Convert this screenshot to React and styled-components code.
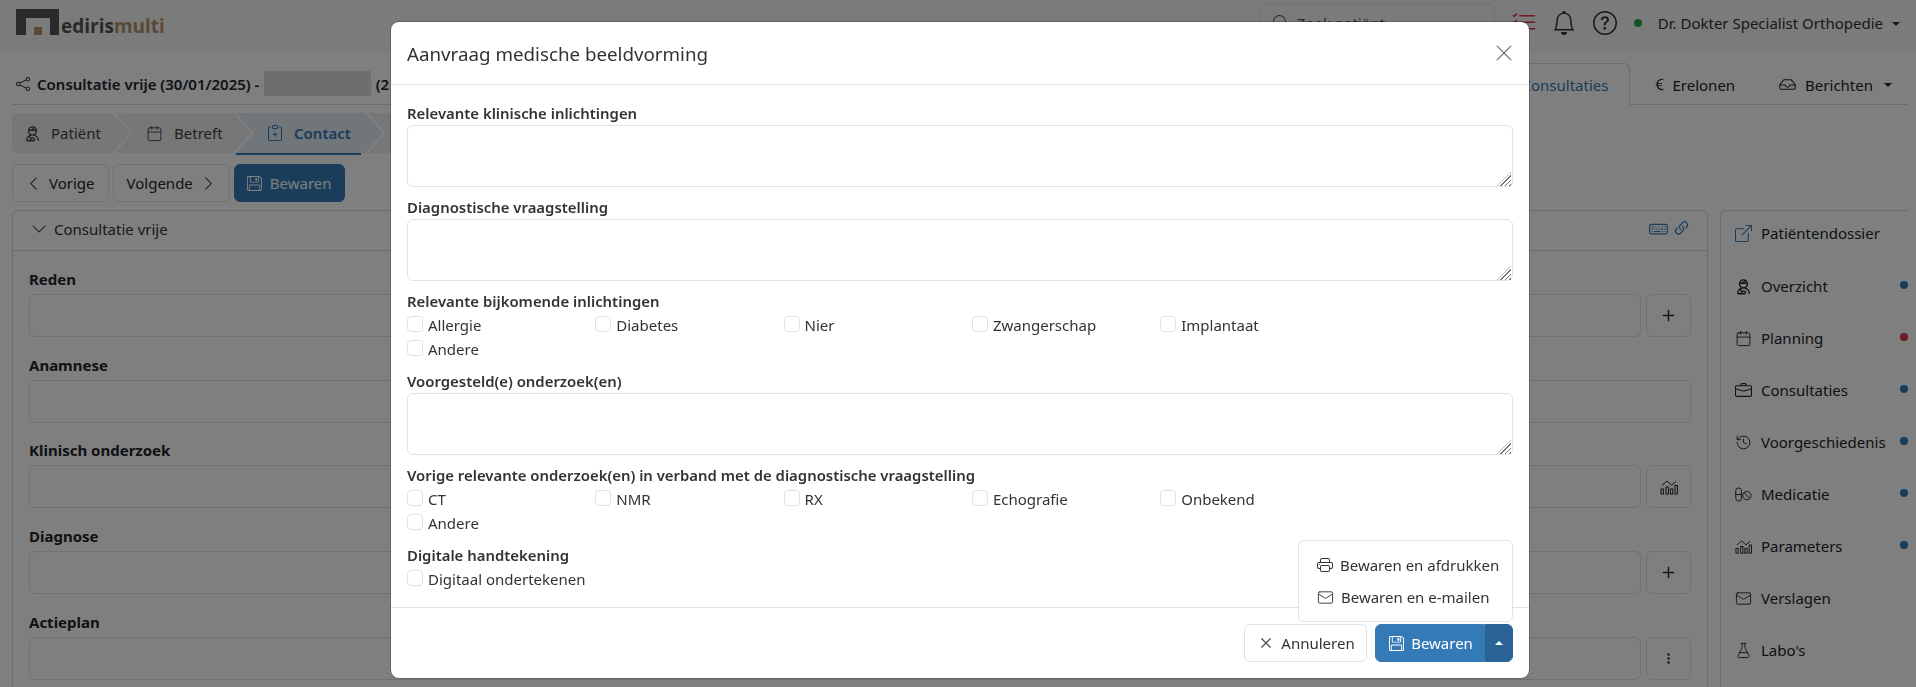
import React from 'react'
import styled, { createGlobalStyle } from 'styled-components'
import {
  BsShare, BsClipboardPlus, BsChevronLeft, BsChevronRight, BsChevronDown,
  BsFloppy, BsCurrencyEuro, BsInbox, BsBell, BsQuestionCircle, BsListCheck, BsKeyboard,
  BsLink45Deg, BsBoxArrowUpRight, BsBriefcase, BsPlusLg, BsThreeDotsVertical,
  BsPrinter, BsXLg, BsSearch,
} from 'react-icons/bs'
import { LiaUserInjuredSolid } from 'react-icons/lia'
import { Calendar, FlaskConical, History, Mail } from 'lucide-react'

const GlobalStyle = createGlobalStyle`
    html, body {
        margin: 0;
        height: 100%;
        overflow: hidden;
        background: #fff;
        color: #212529;
        font-family: "Noto Sans", "Open Sans", sans-serif;
        font-size: 15px;
        line-height: 24px;
    }
    * {
        box-sizing: border-box;
    }
`

const Page = styled.div`
    height: 687px;
    overflow: hidden;
`
const TopBar = styled.header`
    display: flex;
    align-items: center;
    justify-content: space-between;
    height: 53px;
    padding: 0 16px;
    background: #f6f6f6;
`
const Logo = styled.div`
    display: flex;
    align-items: flex-end;
    height: 26px;
    margin-top: -9px;
`
const LogoWord = styled.span`
    font-family: "Open Sans", sans-serif;
    font-weight: 700;
    font-size: 19px;
    line-height: 20px;
    margin-left: 1px;
    margin-bottom: -1px;
    color: #555;
    > b {
        color: #b4946a;
        font-weight: 700;
    }
`
const TopActions = styled.div`
    display: flex;
    align-items: center;
    color: #333;
    margin-top: -7px;
`
const SearchBox = styled.div`
    display: flex;
    align-items: center;
    gap: 8px;
    width: 235px;
    height: 38px;
    margin-right: 16px;
    padding: 0 12px;
    border: 1px solid #dee2e6;
    border-radius: 6px;
    font-size: 15px;
    color: #555;
`
const TopIcon = styled.span`
    display: flex;
    margin-right: ${p => p.$gap || 17}px;
    font-size: ${p => p.$size || 24}px;
    color: ${p => p.$color || 'inherit'};
`
const StatusDot = styled.span`
    width: 8px;
    height: 8px;
    margin-right: 16px;
    border-radius: 50%;
    background: #28a745;
`
const Caret = styled.span`
    display: inline-block;
    margin-left: ${p => p.$gap ?? 9}px;
    vertical-align: 3px;
    border-left: 4px solid transparent;
    border-right: 4px solid transparent;
    border-top: ${p => (p.$up ? '0' : '4px solid currentColor')};
    border-bottom: ${p => (p.$up ? '4px solid currentColor' : '0')};
`
const Content = styled.main`
    padding: 0 8px 0 12px;
`
const TitleRow = styled.div`
    display: flex;
    align-items: flex-end;
    justify-content: space-between;
    height: 52px;
    border-bottom: 1px solid #d8d8d8;
`
const RecordTitle = styled.h1`
    display: flex;
    align-items: center;
    gap: 7px;
    height: 41px;
    margin: 0;
    padding-left: 4px;
    font-size: 15px;
    font-weight: 600;
    white-space: nowrap;
`
const Redacted = styled.span`
    position: relative;
    z-index: 1;
    width: 107px;
    height: 25px;
    margin: 0 -15px 0 -2px;
    background: #ddd;
`
const Tabs = styled.nav`
    display: flex;
    align-items: stretch;
    height: 42px;
    margin-bottom: -1px;
    margin-right: -6px;
`
const Tab = styled.a`
    display: flex;
    align-items: center;
    gap: ${p => p.$gap || 9}px;
    padding: 1px 21px 0;
    color: ${p => (p.$active ? '#337ab7' : '#212529')};
    background: ${p => (p.$active ? '#fff' : 'transparent')};
    border: 1px solid ${p => (p.$active ? '#d8d8d8' : 'transparent')};
    border-bottom-color: ${p => (p.$active ? '#fff' : 'transparent')};
    border-radius: 6px 6px 0 0;
    > svg {
        flex: none;
    }
`
const Wizard = styled.div`
    display: flex;
    height: 42px;
    margin-top: 8px;
`
const Step = styled.a`
    display: flex;
    align-items: center;
    gap: ${p => p.$gap || 11}px;
    width: ${p => p.$width + 18}px;
    height: 40px;
    padding-left: ${p => p.$inset}px;
    margin-right: -15px;
    font-weight: ${p => (p.$active ? 600 : 400)};
    color: ${p => (p.$active ? '#337ab7' : '#444')};
    background: ${p => (p.$active ? '#e1ecf5' : '#eee')};
    clip-path: polygon(0 0, calc(100% - 18px) 0, 100% 50%, calc(100% - 18px) 100%, 0 100%, ${p => (p.$first ? '0 50%' : '18px 50%')});
    border-radius: ${p => (p.$first ? '5px 0 0 5px' : '0')};
    > svg {
        flex: none;
    }
`
const ActiveLine = styled.div`
    width: 125px;
    height: 2px;
    margin: -2px 0 0 224px;
    background: #337ab7;
`
const Actions = styled.div`
    display: flex;
    gap: 4px;
    margin-top: 9px;
`
const Button = styled.button`
    display: inline-flex;
    align-items: center;
    justify-content: center;
    gap: ${p => p.$gap || 8}px;
    height: 38px;
    padding: 0 ${p => p.$pad || 12}px;
    font: inherit;
    color: ${p => (p.$primary ? '#fff' : '#212529')};
    background: ${p => (p.$primary ? '#337ab7' : '#fff')};
    border: 1px solid ${p => (p.$primary ? '#337ab7' : '#dee2e6')};
    border-radius: 6px;
    > svg {
        flex: none;
    }
`
const Columns = styled.div`
    display: grid;
    grid-template-columns: 1696px 1fr;
    gap: 12px;
    margin-top: 8px;
`
const Panel = styled.section`
    height: 560px;
    border: 1px solid #d8d8d8;
    border-radius: 6px 6px 0 0;
`
const PanelHeader = styled.div`
    display: flex;
    align-items: center;
    justify-content: space-between;
    height: 40px;
    padding: 0 16px 3px 18px;
    border-bottom: 1px solid #d8d8d8;
    color: #333;
`
const PanelTitle = styled.span`
    display: flex;
    align-items: center;
    gap: 7px;
`
const PanelTools = styled.span`
    display: flex;
    align-items: center;
    gap: 4px;
    color: #337ab7;
    font-size: 19px;
    margin-top: -2px;
`
const PanelBody = styled.div`
    padding: 17px 16px 0;
`
const Field = styled.div`
    height: 85.7px;
`
const FieldLabel = styled.label`
    display: block;
    margin-bottom: 3px;
    font-weight: 700;
    font-size: 15px;
    line-height: 23px;
`
const FieldRow = styled.div`
    display: flex;
    gap: 5px;
`
const FieldInput = styled.div`
    flex: 1;
    height: 43px;
    border: 1px solid #dee2e6;
    border-radius: 6px;
`
const FieldButton = styled(Button)`
    width: 45px;
    height: 43px;
    padding: 0;
`
const Sidebar = styled.aside`
    height: 560px;
    padding: 0 0 0 14px;
    border: 1px solid #d8d8d8;
    border-right: 0;
    border-radius: 6px 0 0 0;
`
const SideItem = styled.a`
    display: flex;
    align-items: center;
    gap: 9px;
    height: 52px;
    > svg {
        flex: none;
        width: 17px;
        height: 17px;
    }
`
const SideHead = styled(SideItem)`
    height: 44px;
    margin-bottom: 5px;
    > svg {
        color: #337ab7;
    }
`
const SideDot = styled.span`
    width: 8px;
    height: 8px;
    margin-left: auto;
    margin-top: -3px;
    border-radius: 50%;
    background: ${p => p.$color};
`
// the line-awesome glyph sits small in its box
const PersonIcon = styled(LiaUserInjuredSolid)`
    && {
        width: 21px;
        height: 21px;
        margin: 0 -2px;
    }
`
const BoldX = styled(BsXLg)`
    stroke: currentColor;
    stroke-width: .6px;
`
const BoldPlus = styled(BsPlusLg)`
    stroke: currentColor;
    stroke-width: .5px;
`

// modal
const Backdrop = styled.div`
    position: fixed;
    z-index: 10;
    inset: 0;
    background: rgba(0, 0, 0, .5);
`
const Modal = styled.div`
    position: fixed;
    z-index: 11;
    top: 22px;
    left: 391px;
    width: 1138px;
    height: 656px;
    background: #fff;
    border-radius: 8px;
    box-shadow: 0 0 0 1px rgba(0, 0, 0, .2);
    display: flex;
    flex-direction: column;
`
const ModalHeader = styled.div`
    display: flex;
    align-items: center;
    justify-content: space-between;
    height: 63px;
    padding: 2px 16px 0;
    border-bottom: 1px solid #dee2e6;
`
const ModalTitle = styled.h2`
    margin: 0;
    font-size: 18.75px;
    font-weight: 400;
    color: #333;
`
const CloseButton = styled.button`
    display: flex;
    padding: 0;
    margin: -2px -1px 0 0;
    background: none;
    border: 0;
    color: #777;
    font-size: 20px;
`
const ModalBody = styled.div`
    flex: 1;
    padding: 16px 16px 0;
`
const Group = styled.div`
    margin-bottom: 8px;
`
const GroupLabel = styled.div`
    font-weight: 600;
    font-size: 14.9px;
    line-height: 24px;
    color: #333;
`
const TextAreaBox = styled.div`
    position: relative;
    height: 62px;
    &::after {
        content: "";
        position: absolute;
        right: 2px;
        bottom: 1px;
        width: 14px;
        height: 14px;
        pointer-events: none;
        clip-path: polygon(100% 0, 100% 100%, 0 100%);
        background: repeating-linear-gradient(135deg, #777 0 1.2px, transparent 1.2px 3px);
    }
`
const TextArea = styled.textarea`
    display: block;
    width: 100%;
    height: 100%;
    padding: 6px 12px;
    border: 1px solid #dee2e6;
    border-radius: 6px;
    outline: none;
    resize: none;
`
const CheckGrid = styled.div`
    display: grid;
    grid-template-columns: repeat(5, 188.3px);
`
const CheckLabel = styled.label`
    display: flex;
    align-items: center;
    gap: 5px;
    height: 24px;
    font-size: 15px;
    color: #333;
`
const CheckBox = styled.input.attrs({ type: 'checkbox' })`
    appearance: none;
    width: 16px;
    height: 16px;
    margin: -2px 0 0;
    border: 1px solid #dee2e6;
    border-radius: 4px;
    background: #fff;
`
const ModalFooter = styled.div`
    display: flex;
    justify-content: flex-end;
    gap: 8px;
    height: 71px;
    padding: 16px;
    border-top: 1px solid #dee2e6;
`
const CancelButton = styled(Button)`
    width: 123px;
    gap: 9px;
    padding: 0 0 0 4px;
    color: #333;
`
const SplitButton = styled.div`
    position: relative;
    display: flex;
`
const SaveMain = styled(Button)`
    width: 110px;
    gap: 7px;
    padding: 0 0 0 2px;
    border-radius: 6px 0 0 6px;
`
const SaveToggle = styled(Button)`
    width: 28px;
    padding: 0;
    background: #2a6496;
    border-color: #2a6496;
    border-radius: 0 6px 6px 0;
`
const SaveMenu = styled.div`
    position: absolute;
    right: 0;
    bottom: 40px;
    width: 215px;
    height: 82px;
    padding: 8px 0;
    background: #fff;
    border: 1px solid #dee2e6;
    border-radius: 6px;
`
const SaveMenuItem = styled.a`
    display: flex;
    align-items: center;
    gap: 7px;
    height: 32px;
    padding-left: 18px;
    color: #333;
    white-space: nowrap;
`

// no icon in the packages for these two
const PillIcon = () => (
  <svg width="18" height="16" viewBox="0 0 18 16" fill="none" stroke="currentColor" strokeWidth="1">
    <rect x="0.8" y="1" width="6" height="14" rx="3" />
    <path d="M0.8 8h6" />
    <circle cx="12.6" cy="9.2" r="4.4" />
    <path d="M9.6 6.2l6 6" />
  </svg>
)
const ChartIcon = () => (
  <svg width="18" height="16" viewBox="0 0 18 16" fill="none" stroke="currentColor" strokeWidth="1">
    <rect x="1" y="10" width="2.4" height="5" />
    <rect x="6" y="8" width="2.4" height="7" />
    <rect x="10.4" y="10" width="2.4" height="5" />
    <rect x="15" y="6.5" width="2.4" height="8.5" />
    <path d="M2 6.5L7 2l4.6 4.2L16 2.5" />
  </svg>
)

const steps = [
  { id: 'patient', label: 'Patiënt', icon: <LiaUserInjuredSolid size={21} />, width: 100, inset: 10, gap: 8, first: true },
  { id: 'betreft', label: 'Betreft', icon: <Calendar size={17} strokeWidth={1.3} />, width: 118, inset: 31 },
  { id: 'contact', label: 'Contact', icon: <BsClipboardPlus size={16} />, width: 129, inset: 31, active: true },
  { id: 'next', label: '', icon: null, width: 200, inset: 30 },
]

const fields = [
  { label: 'Reden', button: <BoldPlus size={15} /> },
  { label: 'Anamnese' },
  { label: 'Klinisch onderzoek', button: <ChartIcon /> },
  { label: 'Diagnose', button: <BoldPlus size={15} /> },
  { label: 'Actieplan', button: <BsThreeDotsVertical size={13} /> },
]

const sideItems = [
  { label: 'Overzicht', icon: <PersonIcon />, dot: '#337ab7' },
  { label: 'Planning', icon: <Calendar strokeWidth={1.3} />, dot: '#dc3545' },
  { label: 'Consultaties', icon: <BsBriefcase />, dot: '#337ab7' },
  { label: 'Voorgeschiedenis', icon: <History strokeWidth={1.3} />, dot: '#337ab7' },
  { label: 'Medicatie', icon: <PillIcon />, dot: '#337ab7' },
  { label: 'Parameters', icon: <ChartIcon />, dot: '#337ab7' },
  { label: 'Verslagen', icon: <Mail strokeWidth={1.3} /> },
  { label: "Labo's", icon: <FlaskConical strokeWidth={1.3} /> },
]

const CheckGroup = ({ items }) => (
  <CheckGrid>
    {items.map(item => (
      <CheckLabel key={item}><CheckBox />{item}</CheckLabel>
    ))}
  </CheckGrid>
)

const TextField = ({ label }) => (
  <Group>
    <GroupLabel>{label}</GroupLabel>
    <TextAreaBox><TextArea /></TextAreaBox>
  </Group>
)

const App = () => {
  return (
    <>
      <GlobalStyle />
      <Page>
        <TopBar>
          <Logo>
            <svg width="44" height="26" viewBox="0 0 44 26">
              <path d="M0 0h43v26h-9V9H10v17H0z" fill="#555" />
              <rect x="18" y="18" width="8" height="8" fill="#b4946a" />
            </svg>
            <LogoWord>ediris<b>multi</b></LogoWord>
          </Logo>
          <TopActions>
            <SearchBox><BsSearch size={16} />Zoek patiënt...</SearchBox>
            <TopIcon $size={26} $gap={15} $color="#dc3545"><BsListCheck /></TopIcon>
            <TopIcon><BsBell /></TopIcon>
            <TopIcon><BsQuestionCircle /></TopIcon>
            <StatusDot />
            <span>Dr. Dokter Specialist Orthopedie<Caret /></span>
          </TopActions>
        </TopBar>
        <Content>
          <TitleRow>
            <RecordTitle>
              <BsShare size={14} />
              Consultatie vrije (30/01/2025) -
              <Redacted />
              <span>E (2</span>
            </RecordTitle>
            <Tabs>
              <Tab $active>Consultaties</Tab>
              <Tab $gap={5}><BsCurrencyEuro />Erelonen</Tab>
              <Tab><BsInbox size={17} />Berichten<Caret $gap={2} /></Tab>
            </Tabs>
          </TitleRow>
          <Wizard>
            {steps.map(step => (
              <Step key={step.id} $width={step.width} $inset={step.inset} $gap={step.gap} $first={step.first} $active={step.active}>
                {step.icon}{step.label}
              </Step>
            ))}
          </Wizard>
          <ActiveLine />
          <Actions>
            <Button $pad={13}><BsChevronLeft />Vorige</Button>
            <Button $pad={13}>Volgende<BsChevronRight /></Button>
            <Button $primary $gap={8}><BsFloppy />Bewaren</Button>
          </Actions>
          <Columns>
            <Panel>
              <PanelHeader>
                <PanelTitle><BsChevronDown size={16} />Consultatie vrije</PanelTitle>
                <PanelTools><BsKeyboard /><BsLink45Deg /></PanelTools>
              </PanelHeader>
              <PanelBody>
                {fields.map(field => (
                  <Field key={field.label}>
                    <FieldLabel>{field.label}</FieldLabel>
                    <FieldRow>
                      <FieldInput />
                      {field.button && <FieldButton>{field.button}</FieldButton>}
                    </FieldRow>
                  </Field>
                ))}
              </PanelBody>
            </Panel>
            <Sidebar>
              <SideHead><BsBoxArrowUpRight />Patiëntendossier</SideHead>
              {sideItems.map(item => (
                <SideItem key={item.label}>
                  {item.icon}{item.label}
                  {item.dot && <SideDot $color={item.dot} />}
                </SideItem>
              ))}
            </Sidebar>
          </Columns>
        </Content>
      </Page>
      <Backdrop />
      <Modal>
        <ModalHeader>
          <ModalTitle>Aanvraag medische beeldvorming</ModalTitle>
          <CloseButton><BsXLg /></CloseButton>
        </ModalHeader>
        <ModalBody>
          <TextField label="Relevante klinische inlichtingen" />
          <TextField label="Diagnostische vraagstelling" />
          <Group>
            <GroupLabel>Relevante bijkomende inlichtingen</GroupLabel>
            <CheckGroup items={['Allergie', 'Diabetes', 'Nier', 'Zwangerschap', 'Implantaat', 'Andere']} />
          </Group>
          <TextField label="Voorgesteld(e) onderzoek(en)" />
          <Group>
            <GroupLabel>Vorige relevante onderzoek(en) in verband met de diagnostische vraagstelling</GroupLabel>
            <CheckGroup items={['CT', 'NMR', 'RX', 'Echografie', 'Onbekend', 'Andere']} />
          </Group>
          <Group>
            <GroupLabel>Digitale handtekening</GroupLabel>
            <CheckGroup items={['Digitaal ondertekenen']} />
          </Group>
        </ModalBody>
        <ModalFooter>
          <CancelButton><BoldX size={12} />Annuleren</CancelButton>
          <SplitButton>
            <SaveMenu>
              <SaveMenuItem><BsPrinter size={16} />Bewaren en afdrukken</SaveMenuItem>
              <SaveMenuItem><Mail size={17} strokeWidth={1.3} />Bewaren en e-mailen</SaveMenuItem>
            </SaveMenu>
            <SaveMain $primary><BsFloppy />Bewaren</SaveMain>
            <SaveToggle $primary><Caret $up $gap={0} /></SaveToggle>
          </SplitButton>
        </ModalFooter>
      </Modal>
    </>
  )
}

export default App
